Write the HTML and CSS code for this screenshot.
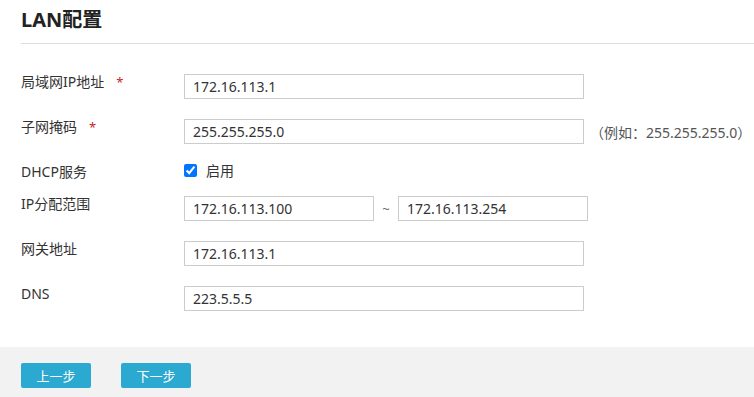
FILE: index.html
```html
<!DOCTYPE html>
<html lang="zh-CN">

<head>
  <meta charset="UTF-8" />
  <meta name="viewport" content="width=device-width, initial-scale=1.0" />
  <title>LAN配置</title>
  <link rel="stylesheet" href="styles.css">
</head>

<body>
  <div class="page-title">
    <h2>LAN配置</h2>
  </div>

  <form class="lan-form">
    <div class="form-row">
      <label class="form-label">局域网IP地址<span class="required">*</span></label>
      <div class="form-field">
        <input type="text" class="text-input" value="172.16.113.1">
      </div>
    </div>

    <div class="form-row">
      <label class="form-label">子网掩码<span class="required">*</span></label>
      <div class="form-field">
        <input type="text" class="text-input" value="255.255.255.0">
        <span class="hint">（例如：255.255.255.0）</span>
      </div>
    </div>

    <div class="form-row check-row">
      <label class="form-label">DHCP服务</label>
      <div class="form-field">
        <label class="check-label"><input type="checkbox" checked> 启用</label>
      </div>
    </div>

    <div class="form-row">
      <label class="form-label">IP分配范围</label>
      <div class="form-field">
        <input type="text" class="text-input short" value="172.16.113.100">
        <span class="range-sep">~</span>
        <input type="text" class="text-input short" value="172.16.113.254">
      </div>
    </div>

    <div class="form-row">
      <label class="form-label">网关地址</label>
      <div class="form-field">
        <input type="text" class="text-input" value="172.16.113.1">
      </div>
    </div>

    <div class="form-row">
      <label class="form-label">DNS</label>
      <div class="form-field">
        <input type="text" class="text-input" value="223.5.5.5">
      </div>
    </div>
  </form>

  <div class="form-footer">
    <button type="button" class="btn">上一步</button>
    <button type="button" class="btn">下一步</button>
  </div>
</body>

</html>
```

FILE: styles.css
```css
/* Base */
body {
  margin: 0;
  background-color: white;
  color: #333;
  font-family: 'Noto Sans', 'Noto Sans CJK SC', sans-serif;
  font-size: 14px;
}

/* Title */
.page-title {
  margin-left: 21px;
  height: 43px;
  border-bottom: 1px solid #ddd;
}

.page-title h2 {
  margin: 0;
  padding-top: 6px;
  font-size: 20px;
  line-height: 28px;
  font-weight: bold;
  color: #222;
}

/* Form */
.lan-form {
  padding: 30px 0 16px 21px;
}

.form-row {
  display: flex;
  align-items: flex-start;
  height: 45px;
}

.form-row.check-row {
  height: 32px;
}

.form-label {
  width: 163px;
  line-height: 16px;
  flex-shrink: 0;
}

.required {
  color: #c81e1e;
  margin-left: 12px;
  font-size: 13px;
}

.form-field {
  display: flex;
  align-items: center;
}

.text-input {
  width: 400px;
  height: 25px;
  box-sizing: border-box;
  border: 1px solid #ccc;
  padding: 0 8px;
  font-family: inherit;
  font-size: 14px;
  color: #333;
  outline: none;
}

.text-input.short {
  width: 190px;
}

.range-sep {
  width: 24px;
  text-align: center;
  color: #666;
  font-size: 13px;
}

.hint {
  margin-left: 6px;
  color: #555;
}

.check-label {
  display: flex;
  align-items: center;
  gap: 9px;
  line-height: 13px;
}

.check-label input {
  margin: 0;
  width: 13px;
  height: 13px;
}

/* Footer */
.form-footer {
  background-color: #f2f2f2;
  padding: 16px 21px 20px;
  display: flex;
  gap: 30px;
}

.btn {
  width: 70px;
  height: 25px;
  border: none;
  border-radius: 2px;
  background-color: #2ba9d0;
  color: white;
  font-family: inherit;
  font-size: 13px;
  cursor: pointer;
}
```
